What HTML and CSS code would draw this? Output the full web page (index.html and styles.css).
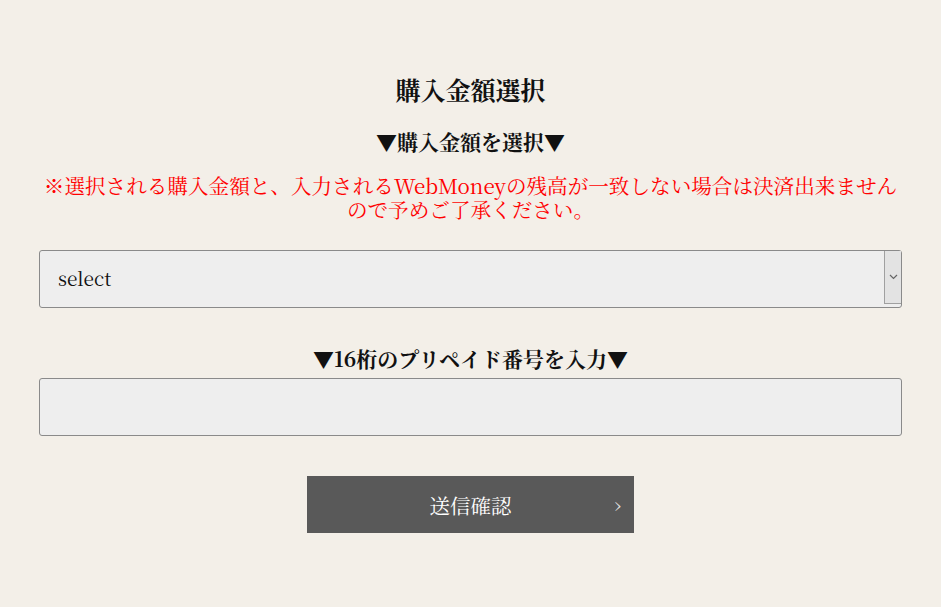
FILE: index.html
```html
<!DOCTYPE html>
<html lang="ja">
<head>
    <meta charset="UTF-8">
    <meta name="viewport" content="width=device-width, initial-scale=1.0">
    <title>購入金額選択</title>
    <link rel="stylesheet" href="styles.css">
</head>
<body>

<div class="form-container">
    <h2 class="title">購入金額選択</h2>
    <form id="payForm">
        <h3 class="label">▼購入金額を選択▼</h3>
        <p class="notice">※選択される購入金額と、入力されるWebMoneyの残高が一致しない場合は決済出来ません<br>ので予めご了承ください。</p>

        <div class="select-wrap">
            <select id="amount" class="field">
                <option>select</option>
            </select>
            <span class="select-arrow">
                <svg width="9" height="6" viewBox="0 0 9 6"><path d="M1 1 L4.5 4.5 L8 1" fill="none" stroke="#666" stroke-width="1.2"/></svg>
            </span>
        </div>

        <h3 class="label label-card">▼16桁のプリペイド番号を入力▼</h3>
        <input type="text" id="cardNumber" class="field">

        <div class="button-row">
            <button type="submit" class="submit">送信確認<span class="chev">›</span></button>
        </div>
    </form>
</div>

</body>
</html>
```

FILE: styles.css
```css
body {
    font-family: "Noto Serif CJK JP", "Noto Serif JP", "Liberation Serif", "Noto Sans CJK JP", serif;
    margin: 0;
    padding: 0;
    background-color: #f3efe8;
    color: #111;
}
.form-container {
    padding: 73px 39px 40px;
}
.title {
    text-align: center;
    font-size: 25px;
    margin: 0 0 22px;
    line-height: 32px;
}
.label {
    text-align: center;
    font-size: 21px;
    margin: 0;
    line-height: 28px;
}
.notice {
    color: #f00;
    text-align: center;
    font-size: 20.6px;
    line-height: 24px;
    margin: 18px 0 29px;
}
.select-wrap {
    position: relative;
}
.field {
    display: block;
    width: 100%;
    box-sizing: border-box;
    height: 58px;
    background: #eeeeee;
    border: 1px solid #8a8a8a;
    border-radius: 3px;
    font-family: inherit;
    font-size: 19px;
    padding: 0 18px 3px;
    color: #111;
    -webkit-appearance: none;
    appearance: none;
}
.select-arrow {
    position: absolute;
    right: 1px;
    top: 1px;
    bottom: 4px;
    width: 16px;
    background: #e3e3e3;
    border-left: 1px solid #a0a0a0;
    border-bottom: 1px solid #a0a0a0;
    display: flex;
    align-items: center;
    justify-content: center;
}
.label-card {
    margin-top: 36px;
    margin-bottom: 6px;
}
.button-row {
    display: flex;
    justify-content: center;
    margin-top: 40px;
}
.submit {
    position: relative;
    width: 327px;
    height: 57px;
    background-color: #595959;
    color: #fff;
    border: none;
    font-family: inherit;
    font-size: 20.5px;
    cursor: pointer;
}
.chev {
    position: absolute;
    right: 13px;
    top: 50%;
    transform: translateY(-55%);
    font-size: 20px;
    color: #ddd;
}
```
